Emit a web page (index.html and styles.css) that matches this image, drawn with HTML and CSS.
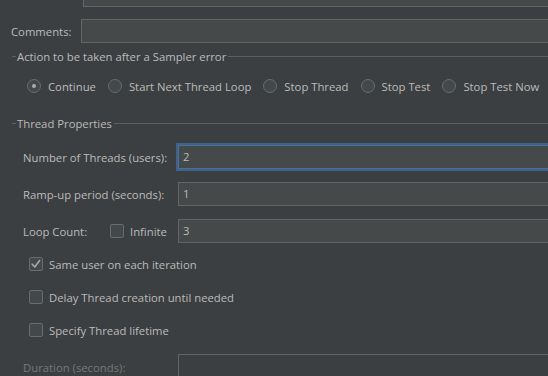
FILE: index.html
```html
<!DOCTYPE html>
<html>
<head>
<meta charset="utf-8">
<link rel="stylesheet" href="styles.css">
</head>
<body>
<div class="page">
  <div class="row row-name">
    <span class="lbl lbl-name">Name:</span>
    <div class="field field-name">Users API</div>
  </div>
  <div class="row row-comments">
    <span class="lbl lbl-comments">Comments:</span>
    <div class="field field-comments"></div>
  </div>

  <div class="group group-action">
    <div class="legend"><span class="legend-text">Action to be taken after a Sampler error</span></div>
    <div class="radios">
      <label class="radio"><span class="radio-circle checked"></span><span>Continue</span></label>
      <label class="radio"><span class="radio-circle"></span><span>Start Next Thread Loop</span></label>
      <label class="radio"><span class="radio-circle"></span><span>Stop Thread</span></label>
      <label class="radio"><span class="radio-circle"></span><span>Stop Test</span></label>
      <label class="radio"><span class="radio-circle"></span><span>Stop Test Now</span></label>
    </div>
  </div>

  <div class="group group-thread">
    <div class="legend legend-thread"><span class="legend-text">Thread Properties</span></div>
    <div class="props">
      <div class="prop">
        <span class="prop-lbl">Number of Threads (users):</span>
        <div class="field field-prop focused">2</div>
      </div>
      <div class="prop">
        <span class="prop-lbl">Ramp-up period (seconds):</span>
        <div class="field field-prop">1</div>
      </div>
      <div class="prop">
        <span class="prop-lbl prop-lbl-loop">Loop Count:</span>
        <label class="check check-inline"><span class="box"></span><span>Infinite</span></label>
        <div class="field field-prop">3</div>
      </div>
    </div>
    <div class="checks">
      <label class="check"><span class="box checked"><svg viewBox="0 0 14 14" width="14" height="14"><path d="M3.2 7.2 L5.8 10 L10.6 3.6" fill="none" stroke="#a9a9a9" stroke-width="1.6" stroke-linecap="round" stroke-linejoin="round"/></svg></span><span>Same user on each iteration</span></label>
      <label class="check"><span class="box"></span><span>Delay Thread creation until needed</span></label>
      <label class="check"><span class="box"></span><span>Specify Thread lifetime</span></label>
    </div>
    <div class="prop prop-duration">
      <span class="prop-lbl disabled">Duration (seconds):</span>
      <div class="field field-prop field-disabled"></div>
    </div>
  </div>
</div>
</body>
</html>
```

FILE: styles.css
```css
* { box-sizing: border-box; }
html, body {
  margin: 0;
  padding: 0;
  background: #3c3f41;
  overflow: hidden;
}
body {
  width: 548px;
  height: 376px;
  font-family: "Open Sans", "Noto Sans", sans-serif;
  font-size: 11.3px;
  color: #bbbbbb;
}
.page {
  margin-top: -17px;
  padding-left: 11px;
}
.row {
  display: flex;
  align-items: center;
  height: 24px;
}
.row-comments { margin-top: 12px; }
.lbl-name { width: 72px; }
.lbl-comments { width: 70px; }
.field {
  height: 24px;
  background: #45494a;
  border: 1px solid #646464;
  display: flex;
  align-items: center;
  padding-left: 4px;
  line-height: 1;
}
.row .field { flex: 1; margin-right: -20px; }

.group { margin-left: 1px; }
.legend {
  display: flex;
  align-items: center;
  height: 14px;
  margin-top: 6px;
}
.legend::before {
  content: "";
  width: 4px;
  border-top: 1px solid #5e6060;
}
.legend::after {
  content: "";
  flex: 1;
  border-top: 1px solid #5e6060;
  margin-left: 2px;
}
.legend-text { padding-left: 1px; }
.legend-thread { margin-top: 22px; }

.radios {
  display: flex;
  align-items: center;
  height: 16px;
  margin-top: 15px;
  padding-left: 15px;
  gap: 12px;
  white-space: nowrap;
}
.radio {
  display: flex;
  align-items: center;
  gap: 7px;
}
.radio-circle {
  width: 14px;
  height: 14px;
  border-radius: 50%;
  border: 1px solid #6b6b6b;
  background: #43494a;
  position: relative;
  flex: none;
}
.radio-circle.checked::after {
  content: "";
  position: absolute;
  left: 4px;
  top: 4px;
  width: 4px;
  height: 4px;
  border-radius: 50%;
  background: #a9a9a9;
}

.props {
  margin-top: 15px;
  padding-left: 11px;
  display: flex;
  flex-direction: column;
  gap: 13px;
}
.prop {
  display: flex;
  align-items: center;
  height: 24px;
}
.prop-lbl {
  width: 155px;
  flex: none;
}
.prop-lbl-loop { width: 87px; }
.field-prop {
  flex: 1;
  margin-right: -20px;
  padding-left: 4px;
}
.field.focused {
  box-shadow: 0 0 0 2px #3f6288;
  border-color: #4a6f98;
}
.check {
  display: flex;
  align-items: center;
  gap: 6px;
  height: 20px;
  white-space: nowrap;
}
.check-inline { width: 68px; flex: none; gap: 6px; }
.box {
  width: 14px;
  height: 14px;
  border: 1px solid #6b6b6b;
  border-radius: 2px;
  background: #43494a;
  flex: none;
  display: flex;
  align-items: center;
  justify-content: center;
}
.box svg { display: block; margin: -1px; }
.checks {
  margin-top: 11px;
  padding-left: 17px;
  display: flex;
  flex-direction: column;
  gap: 13px;
}
.prop-duration {
  margin-top: 14px;
  padding-left: 11px;
  align-items: flex-start;
}
.prop-duration .prop-lbl { padding-top: 6px; }
.disabled { color: #777777; }
.field-disabled { background: #3c3f41; }
```
